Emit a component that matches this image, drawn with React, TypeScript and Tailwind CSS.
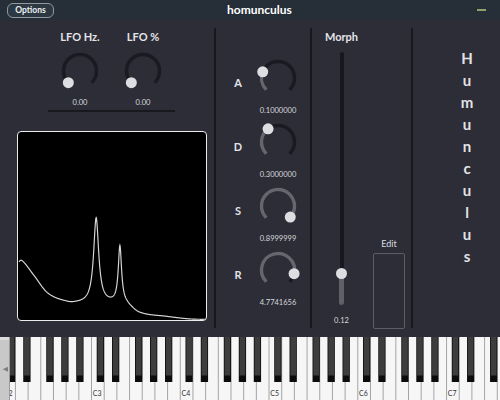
import React from 'react';

const font = "font-['Lato',sans-serif]";

// knob angle: degrees clockwise from top, -135 (min) .. 135 (max)
const pt = (c: number, r: number, a: number) => {
  const rad = (a * Math.PI) / 180;
  return [c + r * Math.sin(rad), c - r * Math.cos(rad)];
};

const arc = (c: number, r: number, a0: number, a1: number) => {
  const [x0, y0] = pt(c, r, a0);
  const [x1, y1] = pt(c, r, a1);
  const large = a1 - a0 > 180 ? 1 : 0;
  return `M ${x0} ${y0} A ${r} ${r} 0 ${large} 1 ${x1} ${y1}`;
};

const Knob = ({ angle }: { angle: number }) => {
  const c = 22;
  const r = 16.5;
  const [tx, ty] = pt(c, r, angle);
  return (
    <svg width="44" height="44" viewBox="0 0 44 44">
      <path d={arc(c, r, -135, 135)} stroke="#1a1b22" strokeWidth="3.5" fill="none" />
      {angle > -134 && (
        <path d={arc(c, r, -135, angle)} stroke="#65666e" strokeWidth="3.5" fill="none" />
      )}
      <circle cx={tx} cy={ty} r="5.5" fill="#dddde2" />
    </svg>
  );
};

const LfoKnob = ({ label }: { label: string }) => (
  <div className="flex w-[50px] flex-col items-center">
    <div className="text-[11px] font-bold leading-[14px] text-[#e4e4e8]">{label}</div>
    <div className="mt-[5px]">
      <Knob angle={-135} />
    </div>
    <div className="mt-[5px] text-[7.5px] leading-[10px] text-[#d8d8dc]">0.00</div>
  </div>
);

const AdsrRow = ({ label, angle, value }: { label: string; angle: number; value: string }) => (
  <div className="flex items-start">
    <div className="ml-[12px] w-[20px] pt-[20px] text-center text-[11px] font-bold leading-[14px] text-[#e4e4e8]">
      {label}
    </div>
    <div className="ml-[5px] flex w-[50px] flex-col items-center">
      <Knob angle={angle} />
      <div className="mt-[6px] text-[7.5px] leading-[10px] text-[#d8d8dc]">{value}</div>
    </div>
  </div>
);

// spectrum-ish curve
const bgX = [0, 4, 16, 30, 50, 62, 95, 108, 123, 150, 173, 190];
const bgY = [58, 60, 45, 27, 18, 17, 17, 16, 7, 3.5, 1, 0.5];

const interp = (x: number) => {
  let i = 0;
  while (i < bgX.length - 2 && x > bgX[i + 1]) i++;
  const h = bgX[i + 1] - bgX[i];
  const t = Math.min(Math.max((x - bgX[i]) / h, 0), 1);
  const slope = (j: number) => {
    if (j === 0) return (bgY[1] - bgY[0]) / (bgX[1] - bgX[0]);
    if (j === bgX.length - 1) return (bgY[j] - bgY[j - 1]) / (bgX[j] - bgX[j - 1]);
    return (bgY[j + 1] - bgY[j - 1]) / (bgX[j + 1] - bgX[j - 1]);
  };
  const m0 = slope(i);
  const m1 = slope(i + 1);
  const t2 = t * t;
  const t3 = t2 * t;
  return (
    (2 * t3 - 3 * t2 + 1) * bgY[i] +
    (t3 - 2 * t2 + t) * h * m0 +
    (-2 * t3 + 3 * t2) * bgY[i + 1] +
    (t3 - t2) * h * m1
  );
};

const curvePath = () => {
  const pts: string[] = [];
  for (let x = 1; x <= 190; x += 0.25) {
    const l1 = 86 / (1 + ((x - 79) / 3.1) ** 2);
    const l2 = 57 / (1 + ((x - 103) / 2) ** 2);
    const y = 190 - (interp(x) + l1 + l2);
    pts.push(`${x.toFixed(2)},${y.toFixed(2)}`);
  }
  return 'M ' + pts.join(' L ');
};

const Keyboard = () => {
  const W = 12.68;
  const c2 = 2.75;
  const names = ['C', 'D', 'E', 'F', 'G', 'A', 'B'];
  const whites = [];
  for (let i = -2; i <= 40; i++) {
    const x = c2 + i * W;
    const n = names[((i % 7) + 7) % 7];
    const oct = 2 + Math.floor(i / 7);
    whites.push({ x, label: n === 'C' ? `C${oct}` : '' });
  }
  const blacks: number[] = [];
  for (let k = 0; k <= 5; k++) {
    const xc = c2 + k * 7 * W;
    [5.2, 20.5, 43.5, 58.5, 73.5].forEach((o) => blacks.push(xc + o));
  }
  return (
    <svg width="500" height="63" viewBox="0 0 500 63" className="block">
      <rect x="0" y="0" width="500" height="63" fill="#f6f6f6" />
      {whites.map((w, i) => (
        <g key={i}>
          <line x1={w.x} y1="0" x2={w.x} y2="63" stroke="#a4a4a4" strokeWidth="1" />
          {w.label && (
            <text x={w.x + 1.2} y="59" fontSize="7" fill="#333" fontFamily="Lato, sans-serif">
              {w.label}
            </text>
          )}
        </g>
      ))}
      {blacks.map((x, i) => (
        <g key={i}>
          <rect x={x} y="0" width="7.3" height="45" fill="#0c0c0c" />
          <rect x={x + 0.8} y="0" width="5.7" height="38.5" fill="#3d3d3d" />
        </g>
      ))}
      <rect x="0" y="0" width="9.5" height="63" fill="#c8c8c8" />
      <rect x="0" y="0" width="9.5" height="3" fill="#dcdcdc" />
      <line x1="9.5" y1="0" x2="9.5" y2="63" stroke="#9a9a9a" strokeWidth="1" />
      <polygon points="2.7,32.2 8,29.7 8,34.7" fill="#7e7e7e" />
    </svg>
  );
};

const letters = ['H', 'u', 'm', 'u', 'n', 'c', 'u', 'l', 'u', 's'];

export default function App() {
  return (
    <div className={`h-[400px] w-[500px] overflow-hidden bg-[#2c2d37] ${font}`}>
      {/* top bar */}
      <div className="flex h-[20px] items-center bg-[#262e37] pl-[7px]">
        <button className="h-[15px] w-[47px] rounded-[6px] border border-[#9098a0] bg-[#2c3942] text-[8.5px] font-bold leading-none text-[#eef0f2]">
          Options
        </button>
        <div className="ml-[173px] text-[12px] font-bold leading-none text-white">homunculus</div>
        <div className="ml-auto mr-[14px] h-[2px] w-[9px] bg-[#8da36c]" />
      </div>

      {/* main */}
      <div className="flex h-[317px]">
        {/* LFO + display */}
        <div className="w-[214px]">
          <div className="ml-[48px] w-[127px] pt-[10px]">
            <div className="ml-[7px] flex gap-[13px]">
              <LfoKnob label="LFO Hz." />
              <LfoKnob label="LFO %" />
            </div>
            <div className="mt-[2px] h-[2px] bg-[#18191f]" />
          </div>
          <div className="ml-[17px] mt-[19px] h-[190px] w-[190px] overflow-hidden rounded-[4px] border-[1.5px] border-[#ececec] bg-black">
            <svg width="100%" height="100%" viewBox="0 0 190 190" preserveAspectRatio="none">
              <path d={curvePath()} stroke="#d6d6d6" strokeWidth="1.2" fill="none" />
            </svg>
          </div>
        </div>

        <div className="mb-[9px] mt-[8px] w-[2px] bg-[#17181e]" />

        {/* ADSR */}
        <div className="flex w-[94px] flex-col gap-1 pt-[36px]">
          <AdsrRow label="A" angle={-68} value="0.1000000" />
          <AdsrRow label="D" angle={-37} value="0.3000000" />
          <AdsrRow label="S" angle={132} value="0.8999999" />
          <AdsrRow label="R" angle={103} value="4.7741656" />
        </div>

        <div className="mb-[9px] mt-[8px] w-[2px] bg-[#17181e]" />

        {/* Morph */}
        <div className="flex w-[99px]">
          <div className="flex w-[59px] flex-col items-center pt-[10px]">
            <div className="text-[11px] font-bold leading-[14px] text-[#e4e4e8]">Morph</div>
            <div className="relative mt-[8px] flex h-[253px] w-[12px] justify-center">
              <div className="h-full w-[4px] rounded-full bg-[#17181e]" />
              <div className="absolute bottom-0 left-[3.5px] h-[32px] w-[5px] rounded-b-full bg-[#5f6068]" />
              <div className="absolute left-[0.5px] top-[215.5px] h-[11px] w-[11px] rounded-full bg-[#dddde2]" />
            </div>
            <div className="mt-[11px] text-[7.5px] leading-[10px] text-[#d8d8dc]">0.12</div>
          </div>
          <div className="ml-[2px] flex w-[32px] flex-col items-center justify-end pb-[8px]">
            <div className="mb-[3px] text-[9px] leading-[12px] text-[#dcdce0]">Edit</div>
            <div className="h-[76px] w-[32px] rounded-[2px] border border-[#5c5d66]" />
          </div>
        </div>

        <div className="mb-[9px] mt-[8px] w-[2px] bg-[#17181e]" />

        {/* title */}
        <div className="flex-1 pl-[21px] pt-[27px]">
          {letters.map((l, i) => (
            <div key={i} className="text-center text-[15px] font-bold leading-[22px] text-[#e2e2e6]">
              {l}
            </div>
          ))}
        </div>
      </div>

      {/* keyboard */}
      <Keyboard />
    </div>
  );
}
